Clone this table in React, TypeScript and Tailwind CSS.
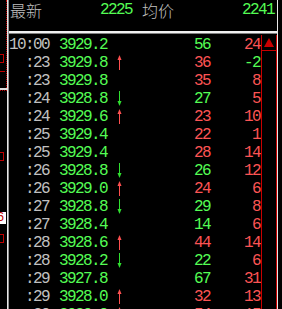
import React from 'react';

type Tone = 'g' | 'r';
type Tick = { t: string; p: string; a?: 'u' | 'd'; v: string; vc: Tone; n: string; nc: Tone };

const ticks: Tick[] = [
  { t: '10:00', p: '3929.2', v: '56', vc: 'g', n: '24', nc: 'r' },
  { t: ':23', p: '3929.8', a: 'u', v: '36', vc: 'r', n: '-2', nc: 'g' },
  { t: ':23', p: '3929.8', v: '35', vc: 'r', n: '8', nc: 'r' },
  { t: ':24', p: '3928.8', a: 'd', v: '27', vc: 'g', n: '5', nc: 'r' },
  { t: ':24', p: '3929.6', a: 'u', v: '23', vc: 'r', n: '10', nc: 'r' },
  { t: ':25', p: '3929.4', v: '22', vc: 'r', n: '1', nc: 'r' },
  { t: ':25', p: '3929.4', v: '28', vc: 'r', n: '14', nc: 'r' },
  { t: ':26', p: '3928.8', a: 'd', v: '26', vc: 'g', n: '12', nc: 'r' },
  { t: ':26', p: '3929.0', a: 'u', v: '24', vc: 'r', n: '6', nc: 'r' },
  { t: ':27', p: '3928.8', a: 'd', v: '29', vc: 'g', n: '8', nc: 'r' },
  { t: ':27', p: '3928.4', v: '14', vc: 'g', n: '6', nc: 'r' },
  { t: ':28', p: '3928.6', a: 'u', v: '44', vc: 'r', n: '14', nc: 'r' },
  { t: ':28', p: '3928.2', a: 'd', v: '22', vc: 'g', n: '6', nc: 'r' },
  { t: ':29', p: '3927.8', v: '67', vc: 'g', n: '31', nc: 'r' },
  { t: ':29', p: '3928.0', a: 'u', v: '32', vc: 'r', n: '13', nc: 'r' },
  { t: ':30', p: '3929.0', a: 'u', v: '54', vc: 'r', n: '15', nc: 'r' },
];

const tone = (c: Tone) => (c === 'g' ? 'text-[#54fc54]' : 'text-[#fc5454]');

const Arrow = ({ dir }: { dir?: 'u' | 'd' }) => {
  if (!dir) return <span className="w-[7px]" />;
  return dir === 'u' ? (
    <svg width="7" height="18" className="shrink-0">
      <polygon points="3.5,1 1.5,6 5.5,6" fill="#ff5050" />
      <rect x="3" y="5" width="1" height="11" fill="#ff5050" />
    </svg>
  ) : (
    <svg width="7" height="18" className="shrink-0">
      <rect x="3" y="1" width="1" height="11" fill="#30e030" />
      <polygon points="1.5,11 5.5,11 3.5,16" fill="#30e030" />
    </svg>
  );
};

const mono = "font-['Liberation_Mono',monospace] tracking-[-1.6px]";
const cjk = "font-['Noto_Sans_CJK_SC',sans-serif] font-light text-[#c0c0c0] whitespace-nowrap";

export default function App() {
  return (
    <div className="w-[282px] h-[309px] bg-black flex overflow-hidden text-[16px] leading-[18px]">
      {/* clipped neighbour panel */}
      <div className="w-[7px] shrink-0 relative">
        <div className="absolute left-[6px] top-0 h-[88px] border-l border-dotted border-[#c00000]" />
        <div className="absolute left-0 top-[88px] w-[7px] h-[2px] bg-[#e0e0e0]" />
        <div className="absolute left-0 top-[90px] w-[7px] border-t border-dotted border-[#c00000]" />
        <div className="absolute left-0 top-[54px] w-[4px] h-[9px] border border-l-0 border-[#c00000]" />
        <div className="absolute left-0 top-[71px] w-[5px] h-px bg-[#c00000]" />
        <div className="absolute left-0 top-[152px] w-[4px] h-[9px] border border-l-0 border-[#c00000]" />
        <div className="absolute left-0 top-[212px] w-[6px] h-[12px] bg-white overflow-hidden">
          <span className="block -ml-[3px] text-[12px] leading-[12px] text-[#c00000] font-['Liberation_Mono',monospace]">6</span>
        </div>
        <div className="absolute left-0 top-[234px] w-[4px] h-[9px] border border-l-0 border-[#c00000]" />
      </div>
      <div className="w-[2px] shrink-0 border-l border-[#e8e8e8] bg-[#909090]" />

      <div className="w-[268px] shrink-0 flex flex-col">
        <div className="h-[31px] shrink-0 flex items-start pt-[1px]">
          <div className="w-[123px] flex justify-between pl-[1px]">
            <span className={cjk}>最新</span>
            <span className={`${mono} text-[#54fc54]`}>2225</span>
          </div>
          <div className="w-[132px] ml-[10px] flex justify-between">
            <span className={cjk}>均价</span>
            <span className={`${mono} text-[#54fc54]`}>2241</span>
          </div>
        </div>
        <div className="h-[2px] shrink-0 bg-[#f0f0f0]" />
        <div className="h-px shrink-0 bg-[#808080]" />
        <div className="flex flex-1 min-h-0 pt-px">
          <div className="w-[252px] flex flex-col pt-[1px]">
            {ticks.map((r, i) => (
              <div key={i} className={`h-[18px] flex shrink-0 ${mono}`}>
                <span className="w-[40px] text-right text-[#c0c0c0]">{r.t}</span>
                <span className="w-[48px] ml-[10px] text-[#54fc54]">{r.p}</span>
                <span className="ml-[9px] flex">
                  <Arrow dir={r.a} />
                </span>
                <span className={`w-[87px] text-right ${tone(r.vc)}`}>{r.v}</span>
                <span className={`w-[50px] text-right ${tone(r.nc)}`}>{r.n}</span>
              </div>
            ))}
          </div>
          <div className="w-[16px] border-x border-[#c80000] flex flex-col">
            <div className="h-[16px] border-b border-[#c80000] flex items-center justify-center">
              <svg width="10" height="9">
                <polygon points="5,0 0,9 10,9" fill="#c80000" />
              </svg>
            </div>
          </div>
        </div>
      </div>
      <div className="w-px shrink-0 bg-[#e8e8e8]" />
    </div>
  );
}
